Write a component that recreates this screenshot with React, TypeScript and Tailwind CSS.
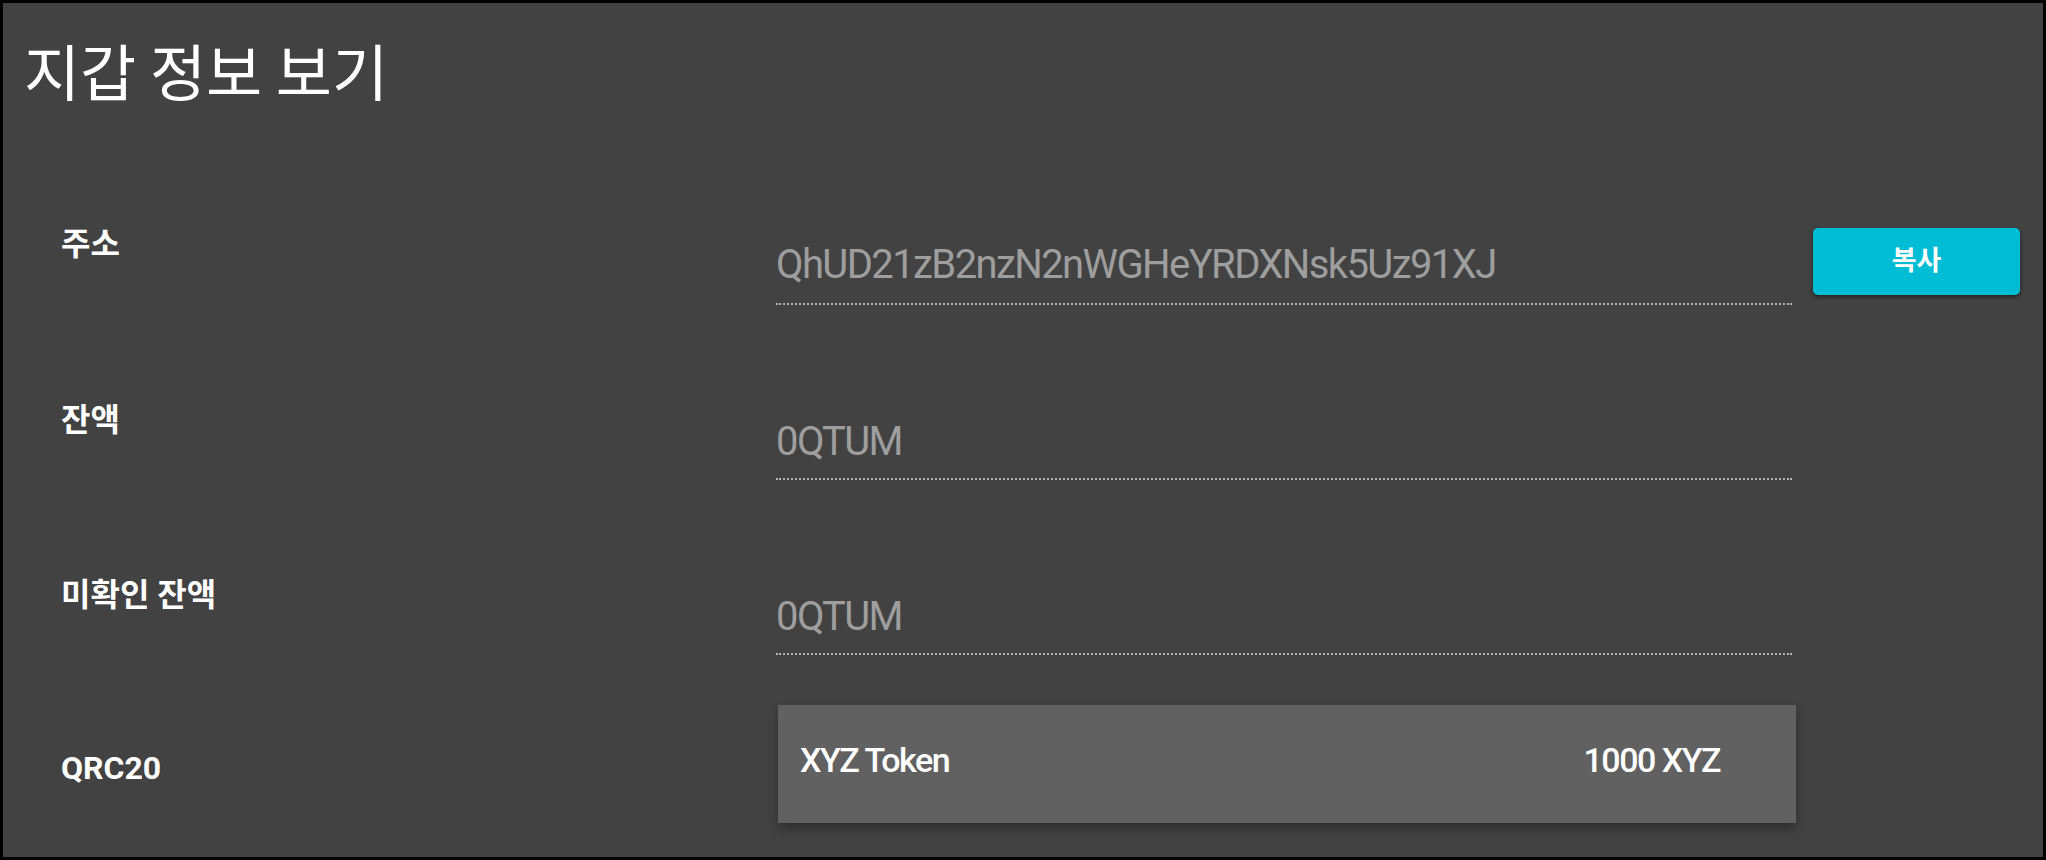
import React from 'react';

const rows = [
  { label: '잔액', value: '0QTUM' },
  { label: '미확인 잔액', value: '0QTUM' },
];

const App: React.FC = () => {
  return (
    <div className="w-[2046px] h-[860px] overflow-hidden border-[3px] border-black bg-[#424242] font-['Roboto','Noto_Sans_CJK_KR',sans-serif] text-white">
      <h1 className="pl-[21px] pt-[36px] text-[61px] leading-none font-normal font-['Noto_Sans_CJK_KR',sans-serif]">
        지갑 정보 보기
      </h1>

      {/* 주소 */}
      <div className="mt-[128px] flex items-start pl-[58px]">
        <div className="w-[715px] text-[32px] leading-none font-bold">주소</div>
        <div className="mt-[17px] w-[1016px] border-b-2 border-dotted border-[#b4b4b4] pb-[18px] text-[40px] leading-none tracking-[-1.6px] text-[#9e9e9e]">
          QhUD21zB2nzN2nWGHeYRDXNsk5Uz91XJ
        </div>
        <button className="ml-[21px] h-[67px] w-[207px] rounded-[5px] bg-[#00bcd4] text-[27px] leading-none font-bold text-white shadow-[0_2px_4px_rgba(0,0,0,0.5)]">
          복사
        </button>
      </div>

      {/* 잔액 / 미확인 잔액 */}
      {rows.map((row, index) => (
        <div key={index} className="mt-[99px] flex items-start pl-[58px]">
          <div className="w-[715px] text-[32px] leading-none font-bold">{row.label}</div>
          <div className="mt-[18px] w-[1016px] border-b-2 border-dotted border-[#b4b4b4] pb-[16px] text-[40px] leading-none tracking-[-1.6px] text-[#9e9e9e]">
            {row.value}
          </div>
        </div>
      ))}

      {/* QRC20 */}
      <div className="mt-[50px] flex items-start pl-[58px]">
        <div className="mt-[47px] w-[717px] text-[32px] leading-none font-bold">QRC20</div>
        <div className="flex h-[118px] w-[1018px] items-center justify-between bg-[#616161] pb-[8px] pl-[22px] pr-[76px] shadow-[0_6px_10px_rgba(0,0,0,0.3)]">
          <span className="text-[34px] leading-none font-medium tracking-[-1.5px]">XYZ Token</span>
          <span className="text-[34px] leading-none font-medium tracking-[-1.5px]">1000 XYZ</span>
        </div>
      </div>
    </div>
  );
};

export default App;
